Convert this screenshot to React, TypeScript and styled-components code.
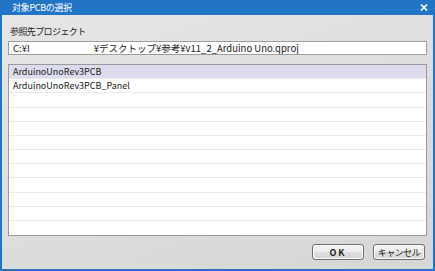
import React from 'react';
import styled, { createGlobalStyle } from 'styled-components';

const GlobalStyle = createGlobalStyle`
  html, body {
    margin: 0;
    padding: 0;
    background: #ffffff;
  }
  * {
    box-sizing: border-box;
  }
`;

const FONT = `"Noto Sans CJK JP", "Liberation Sans", sans-serif`;

// Window frame
const Window = styled.div`
  width: 435px;
  height: 271px;
  background: #2274c6;
  padding: 0 2px 2px 2px;
  display: flex;
  flex-direction: column;
  font-family: ${FONT};
  color: #1a1a1a;
`;

const TitleBar = styled.div`
  height: 15px;
  display: flex;
  align-items: center;
  justify-content: space-between;
  padding: 0 5px 0 10px;
  color: #ffffff;
  font-size: 9px;
  letter-spacing: -0.3px;
`;

const CloseButton = styled.div`
  width: 8px;
  height: 8px;
  display: flex;
  align-items: center;
  justify-content: center;
`;

const Body = styled.div`
  flex: 1;
  background: linear-gradient(160deg, #e6e6e6 0%, #dcdcdc 60%, #d6d6d6 100%);
  padding: 11px 6px 0 6px;
  display: flex;
  flex-direction: column;
`;

const Label = styled.div`
  height: 12px;
  line-height: 12px;
  font-size: 9px;
  letter-spacing: -0.6px;
  padding-left: 2px;
`;

const PathField = styled.div`
  margin-top: 3px;
  height: 14px;
  border: 1px solid #9e9e9e;
  background: #ffffff;
  display: flex;
  align-items: center;
  padding-left: 4px;
  font-size: 9.5px;
  white-space: nowrap;
  overflow: hidden;
`;

const Redacted = styled.span<{ $width: number }>`
  display: inline-block;
  width: ${(p) => p.$width}px;
`;

const List = styled.div`
  margin-top: 9px;
  height: 172px;
  border: 1px solid #9a9a9a;
  background: #ffffff;
  display: grid;
  grid-template-rows: repeat(12, 1fr);
  overflow: hidden;
`;

const Row = styled.div<{ $selected?: boolean; $last?: boolean }>`
  display: flex;
  align-items: center;
  padding-left: 4px;
  font-size: 9px;
  background: ${(p) => (p.$selected ? '#dcdcee' : '#ffffff')};
  border-bottom: ${(p) => (p.$last ? 'none' : '1px solid #ebebeb')};
`;

const Footer = styled.div`
  display: flex;
  justify-content: flex-end;
  gap: 9px;
  padding: 8px 2px 0 0;
`;

const Button = styled.div<{ $bold?: boolean }>`
  width: 52px;
  height: 16px;
  border: 1px solid #6f6f6f;
  border-radius: 3px;
  background: linear-gradient(#f6f6f6 0%, #ececec 48%, #dedede 52%, #d8d8d8 100%);
  box-shadow: inset 0 0 0 1px #fbfbfb;
  display: flex;
  align-items: center;
  justify-content: center;
  font-size: 9px;
  font-weight: ${(p) => (p.$bold ? 700 : 400)};
  letter-spacing: ${(p) => (p.$bold ? '2px' : '-0.5px')};
  color: #222222;
`;

const projects = ['ArduinoUnoRev3PCB', 'ArduinoUnoRev3PCB_Panel'];

const App: React.FC = () => {
  const rows = Array.from({ length: 12 }, (_, i) => projects[i] ?? '');

  return (
    <>
      <GlobalStyle />
      <Window>
        <TitleBar>
          <span>対象PCBの選択</span>
          <CloseButton>
            <svg width="8" height="7" viewBox="0 0 8 7">
              <path d="M1 0.5 L7 6.5 M7 0.5 L1 6.5" stroke="#ffffff" strokeWidth="1.6" />
            </svg>
          </CloseButton>
        </TitleBar>
        <Body>
          <Label>参照先プロジェクト</Label>
          <PathField>
            C:¥I<Redacted $width={64} />¥デスクトップ¥参考¥v11_2_Arduino Uno.qproj
          </PathField>
          <List>
            {rows.map((name, i) => (
              <Row key={i} $selected={i === 0} $last={i === rows.length - 1}>
                {name}
              </Row>
            ))}
          </List>
          <Footer>
            <Button $bold>OK</Button>
            <Button>キャンセル</Button>
          </Footer>
        </Body>
      </Window>
    </>
  );
};

export default App;
